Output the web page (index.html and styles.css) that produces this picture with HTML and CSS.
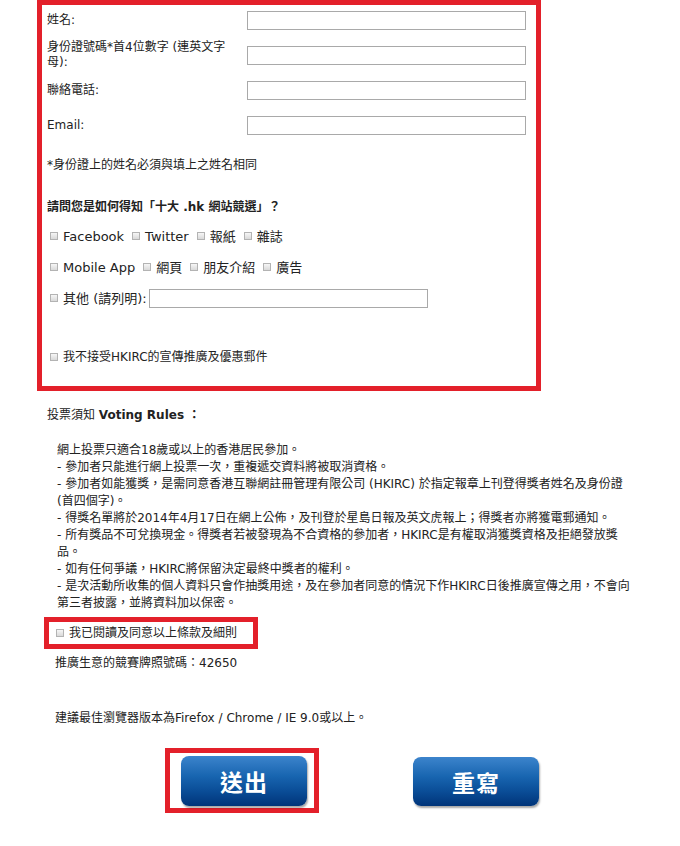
FILE: index.html
```html
<!DOCTYPE html>
<html lang="zh-Hant">

<head>
    <meta charset="UTF-8">
    <title>十大 .hk 網站競選</title>
    <link rel="stylesheet" href="styles.css">
</head>

<body>
    <div class="page">
        <form class="form-box">
            <div class="field-row">
                <label for="name">姓名:</label>
                <input type="text" id="name" name="name">
            </div>
            <div class="field-row">
                <label for="hkid">身份證號碼*首4位數字 (連英文字母):</label>
                <input type="text" id="hkid" name="hkid">
            </div>
            <div class="field-row">
                <label for="phone">聯絡電話:</label>
                <input type="text" id="phone" name="phone">
            </div>
            <div class="field-row">
                <label for="email">Email:</label>
                <input type="text" id="email" name="email">
            </div>

            <p class="note">*身份證上的姓名必須與填上之姓名相同</p>

            <p class="question">請問您是如何得知「十大 .hk 網站競選」？</p>

            <div class="opt-row">
                <input type="checkbox" id="src-fb"><label for="src-fb">Facebook</label>
                <input type="checkbox" id="src-tw"><label for="src-tw">Twitter</label>
                <input type="checkbox" id="src-paper"><label for="src-paper">報紙</label>
                <input type="checkbox" id="src-mag"><label for="src-mag">雜誌</label>
            </div>
            <div class="opt-row">
                <input type="checkbox" id="src-app"><label for="src-app">Mobile App</label>
                <input type="checkbox" id="src-web"><label for="src-web">網頁</label>
                <input type="checkbox" id="src-friend"><label for="src-friend">朋友介紹</label>
                <input type="checkbox" id="src-ad"><label for="src-ad">廣告</label>
            </div>
            <div class="opt-row">
                <input type="checkbox" id="src-other"><label for="src-other" class="other-label">其他 (請列明):</label>
                <input type="text" class="other-input" name="other">
            </div>

            <div class="opt-row opt-optout">
                <input type="checkbox" id="optout"><label for="optout">我不接受HKIRC的宣傳推廣及優惠郵件</label>
            </div>
        </form>

        <h4 class="rules-title">投票須知 <b>Voting Rules ：</b></h4>
        <div class="rules">
            網上投票只適合18歲或以上的香港居民參加。<br>
            - 參加者只能進行網上投票一次，重複遞交資料將被取消資格。<br>
            - 參加者如能獲獎，是需同意香港互聯網註冊管理有限公司 (HKIRC) 於指定報章上刊登得獎者姓名及身份證(首四個字)。<br>
            - 得獎名單將於2014年4月17日在網上公佈，及刊登於星島日報及英文虎報上；得獎者亦將獲電郵通知。<br>
            - 所有獎品不可兌換現金。得獎者若被發現為不合資格的參加者，HKIRC是有權取消獲獎資格及拒絕發放獎品。<br>
            - 如有任何爭議，HKIRC將保留決定最終中獎者的權利。<br>
            - 是次活動所收集的個人資料只會作抽獎用途，及在參加者同意的情況下作HKIRC日後推廣宣傳之用，不會向第三者披露，並將資料加以保密。
        </div>

        <div class="agree-box">
            <input type="checkbox" id="agree"><label for="agree">我已閱讀及同意以上條款及細則</label>
        </div>

        <p class="license">推廣生意的競賽牌照號碼：42650</p>

        <p class="browser">建議最佳瀏覽器版本為Firefox / Chrome / IE 9.0或以上。</p>

        <div class="actions">
            <div class="submit-box">
                <button type="button" class="btn">送出</button>
            </div>
            <button type="button" class="btn btn-reset">重寫</button>
        </div>
    </div>
</body>

</html>
```

FILE: styles.css
```css
body {
    margin: 0;
    background-color: #fff;
    color: #222;
    font-family: "DejaVu Sans", "Noto Sans CJK TC", sans-serif;
    font-size: 12px;
    line-height: 15px;
}

.page {
    padding-left: 37px;
    width: 600px;
}

.form-box {
    width: 489px;
    border: 5px solid #e3202a;
    padding: 0 0 19px 5px;
    box-sizing: content-box;
}

.field-row {
    display: grid;
    grid-template-columns: 200px 279px;
    align-items: center;
    min-height: 30px;
    margin-bottom: 5px;
}

.field-row label {
    padding-right: 10px;
}

input[type="text"] {
    height: 19px;
    margin: 0;
    padding: 1px 3px;
    border: 1px solid #a9a9a9;
    box-sizing: border-box;
    font: inherit;
}

.field-row input {
    width: 279px;
}

.note {
    margin: 18px 0 0;
}

.question {
    margin: 27px 0 0;
    font-weight: bold;
}

.opt-row {
    display: flex;
    align-items: center;
    height: 20px;
    margin-top: 11px;
    font-size: 13px;
}

.opt-row + .opt-row {
    margin-top: 11px;
}

.opt-row label {
    margin-right: 5px;
}

.opt-row .other-label {
    margin-right: 2px;
}

.opt-row .other-input {
    width: 279px;
}

.opt-row.opt-optout {
    margin-top: 39px;
    font-size: 12px;
}

input[type="checkbox"] {
    appearance: none;
    -webkit-appearance: none;
    width: 8px;
    height: 8px;
    margin: 0 5px 0 3px;
    border: 1px solid #b3b3b3;
    background: linear-gradient(#f6f6f6, #d9d9d9);
    box-sizing: border-box;
    flex-shrink: 0;
}

.rules-title {
    margin: 16px 0 0 10px;
    font-size: 12px;
    font-weight: normal;
    line-height: 16px;
}

.rules-title b {
    font-weight: bold;
}

.rules {
    width: 578px;
    margin: 19px 0 0 20px;
    line-height: 17px;
}

.agree-box {
    display: flex;
    align-items: center;
    width: 200px;
    height: 22px;
    margin: 5px 0 0 7px;
    padding-left: 4px;
    border: 5px solid #e3202a;
}

.license {
    margin: 6px 0 0 18px;
    line-height: 16px;
}

.browser {
    margin: 39px 0 0 18px;
    line-height: 16px;
}

.actions {
    display: flex;
    align-items: flex-start;
    margin-top: 22px;
}

.submit-box {
    margin-left: 128px;
    padding: 3px 7px 2px 11px;
    border: 5px solid #e3202a;
}

.btn {
    display: block;
    width: 126px;
    height: 50px;
    border: none;
    border-radius: 8px;
    background: linear-gradient(#3c84cc 0%, #1865b0 40%, #0a4d97 70%, #003479 100%);
    box-shadow: 1px 2px 2px rgba(0, 0, 0, 0.35);
    color: #fff;
    font-family: "Noto Sans CJK TC", sans-serif;
    font-size: 23px;
    font-weight: bold;
    letter-spacing: 1px;
    cursor: pointer;
}

.btn-reset {
    margin: 9px 0 0 94px;
    height: 49px;
}
```
